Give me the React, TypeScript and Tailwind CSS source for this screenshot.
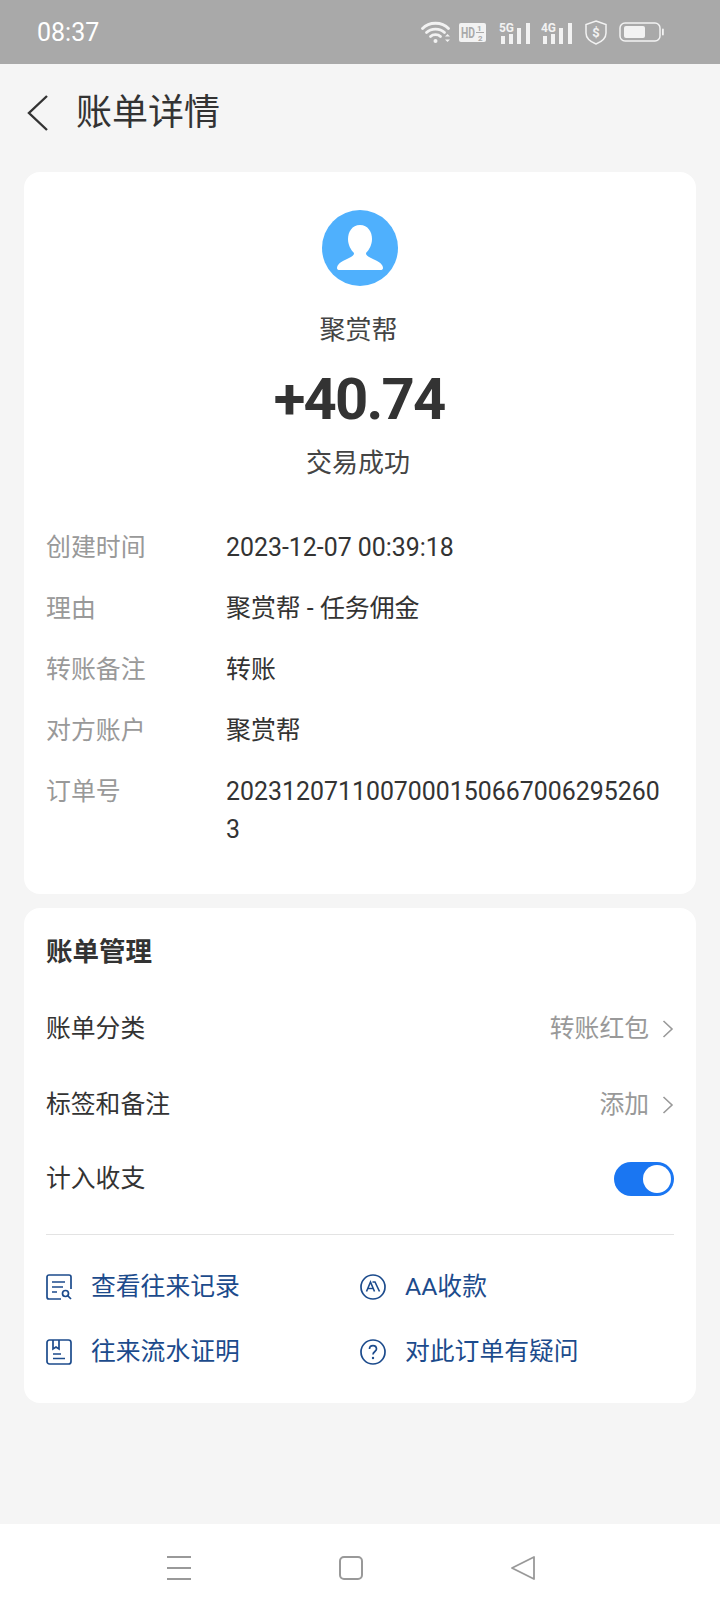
import React from "react";

const rows = [
  { label: "创建时间", value: "2023-12-07 00:39:18" },
  { label: "理由", value: "聚赏帮 - 任务佣金" },
  { label: "转账备注", value: "转账" },
  { label: "对方账户", value: "聚赏帮" },
  { label: "订单号", value: "20231207110070001506670062952603" },
];

const Chevron = () => (
  <svg width="12" height="18" viewBox="0 0 12 18" fill="none" stroke="#999999" strokeWidth="1.6">
    <path d="M1.5 1 L10 9 L1.5 17" />
  </svg>
);

const Signal = ({ label }: { label: string }) => (
  <svg width="32" height="24" viewBox="0 0 32 24" fill="#f2f2f2">
    <text x="0" y="12" fontSize="12.5" fontWeight="700" fontFamily="Roboto, sans-serif" textLength="15" lengthAdjust="spacingAndGlyphs">
      {label}
    </text>
    <rect x="2" y="16" width="4" height="8" />
    <rect x="10" y="14" width="4" height="10" />
    <rect x="18" y="8" width="4" height="16" />
    <rect x="27" y="3" width="4" height="21" />
  </svg>
);

const StatusBar = () => (
  <div className="h-16 bg-[#a9a9a9] flex items-center justify-between pl-[37px] pr-[56px] shrink-0">
    <span className="text-[25px] text-white leading-none">08:37</span>
    <div className="flex items-center">
      <svg width="30" height="24" viewBox="0 0 30 24" fill="none" stroke="#f2f2f2" strokeWidth="2.8" strokeLinecap="round">
        <path d="M1.5 8.5 C8 1.5 21 1.5 27.5 8.5" />
        <path d="M5.5 12.5 C10 8 19 8 23.5 12.5" />
        <path d="M9.5 16.5 C12 14 17 14 19.5 16.5" />
        <circle cx="14.5" cy="21" r="2" fill="#f2f2f2" stroke="none" />
        <path d="M24 16.5 L26.5 14 L29 16.5 Z" fill="#f2f2f2" stroke="none" />
        <path d="M24 19.5 L29 19.5 L26.5 22 Z" fill="#f2f2f2" stroke="none" />
      </svg>
      <svg width="27" height="19" viewBox="0 0 27 19" className="ml-[8px]">
        <rect width="27" height="19" rx="2" fill="#f2f2f2" />
        <text x="2" y="15" fontSize="14" fontWeight="700" fill="#a9a9a9" fontFamily="Roboto, sans-serif" textLength="14" lengthAdjust="spacingAndGlyphs">
          HD
        </text>
        <text x="18" y="8" fontSize="8" fontWeight="700" fill="#a9a9a9" fontFamily="Roboto, sans-serif">
          1
        </text>
        <path d="M17 9.5 H25" stroke="#a9a9a9" strokeWidth="1" />
        <text x="19" y="17.5" fontSize="8" fontWeight="700" fill="#a9a9a9" fontFamily="Roboto, sans-serif">
          2
        </text>
      </svg>
      <div className="ml-[13px] flex">
        <Signal label="5G" />
      </div>
      <div className="ml-[10px] flex">
        <Signal label="4G" />
      </div>
      <svg width="22" height="25" viewBox="0 0 22 25" fill="none" stroke="#f2f2f2" strokeWidth="1.5" className="ml-[12px]">
        <path d="M11 1 L21 4.5 V13 C21 18.5 16 22 11 24 C6 22 1 18.5 1 13 V4.5 Z" />
        <text x="11" y="17" fontSize="13" fontWeight="700" textAnchor="middle" fill="#f2f2f2" stroke="none" fontFamily="Roboto, sans-serif">
          $
        </text>
      </svg>
      <svg width="45" height="20" viewBox="0 0 45 20" fill="none" className="ml-[12px]">
        <rect x="1" y="1" width="40" height="18" rx="5" stroke="#f2f2f2" strokeWidth="1.5" />
        <rect x="5" y="4" width="21" height="12" rx="2" fill="#f2f2f2" />
        <rect x="43" y="6.5" width="1.8" height="7" rx="0.9" fill="#f2f2f2" />
      </svg>
    </div>
  </div>
);

const LinkItem = ({ icon, text }: { icon: React.ReactNode; text: string }) => (
  <div className="flex items-center h-[65px] text-[#1c4b8c] text-[24.8px]">
    <span className="w-[45px] shrink-0 flex">{icon}</span>
    <span>{text}</span>
  </div>
);

const RecordIcon = () => (
  <svg width="26" height="26" viewBox="0 0 26 26" fill="none" stroke="#1c4b8c" strokeWidth="1.7">
    <path d="M15 25 H3 A2 2 0 0 1 1 23 V3 A2 2 0 0 1 3 1 H23 A2 2 0 0 1 25 3 V15" />
    <path d="M6 8 H19 M6 13 H17 M6 18 H11" />
    <circle cx="19.5" cy="19.5" r="3" />
    <path d="M22 22 L25 25" />
  </svg>
);

const ProofIcon = () => (
  <svg width="26" height="26" viewBox="0 0 26 26" fill="none" stroke="#1c4b8c" strokeWidth="1.7">
    <rect x="1" y="1" width="24" height="24" rx="2.5" />
    <path d="M7 1 V10 L10 8 L13 10 V1" />
    <path d="M7 15 H15 M7 19.5 H19" />
  </svg>
);

const AAIcon = () => (
  <svg width="26" height="26" viewBox="0 0 26 26" fill="none" stroke="#1c4b8c" strokeWidth="1.7">
    <circle cx="13" cy="13" r="12" />
    <path d="M6.5 17.5 L10.5 8 L14.5 17.5" strokeWidth="1.6" />
    <path d="M12.5 8 L15 8 L19.5 17.5" strokeWidth="1.6" />
    <path d="M8 14.5 H13" strokeWidth="1.4" />
  </svg>
);

const HelpIcon = () => (
  <svg width="26" height="26" viewBox="0 0 26 26" fill="none" stroke="#1c4b8c" strokeWidth="1.7">
    <circle cx="13" cy="13" r="12" />
    <path d="M9.5 10 C9.5 5.5 16.5 5.5 16.5 10 C16.5 12.5 13 12.5 13 15.5" />
    <circle cx="13" cy="19" r="1.2" fill="#1c4b8c" stroke="none" />
  </svg>
);

const App = () => {
  return (
    <div className="w-[720px] h-[1612px] flex flex-col bg-[#f5f5f5] font-['Roboto','Noto_Sans_CJK_SC',sans-serif] overflow-hidden">
      <StatusBar />

      <div className="h-[108px] flex items-center shrink-0 pl-[27px] pb-[10px]">
        <svg width="22" height="36" viewBox="0 0 22 36" fill="none" stroke="#333333" strokeWidth="2.4">
          <path d="M20 1 L2 18 L20 35" />
        </svg>
        <span className="ml-[27px] text-[36px] text-[#333333]">账单详情</span>
      </div>

      <div className="mx-6 bg-white rounded-[16px] h-[722px] shrink-0 flex flex-col items-center pt-[38px]">
        <svg width="76" height="76" viewBox="0 0 76 76" className="-ml-[1px]">
          <circle cx="38" cy="38" r="38" fill="#4fb0fd" />
          <path
            d="M38 15 C46 15 50 22 50 29 C50 35 47 40 44 43 C44 46 47 47 52 49.5 C58 52 61 55 61 58 C61 59.5 60 60 58.5 60 H17.5 C16 60 15 59.5 15 58 C15 55 18 52 24 49.5 C29 47 32 46 32 43 C29 40 26 35 26 29 C26 22 30 15 38 15 Z"
            fill="#ffffff"
          />
        </svg>
        <div className="mt-[26px] -ml-[3px] text-[26px] leading-[36px] text-[#444444]">聚赏帮</div>
        <div className="mt-[16px] -ml-[2px] text-[58px] leading-[70px] font-bold tracking-[-1.8px] text-[#333333]">+40.74</div>
        <div className="mt-[11px] -ml-[4px] text-[26px] leading-[36px] text-[#444444]">交易成功</div>

        <div className="w-full pl-[22px] pr-[30px] mt-[48px] flex flex-col gap-[23px]">
          {rows.map((row) => (
            <div key={row.label} className="flex text-[24.9px] leading-[38px]">
              <span className="w-[180px] shrink-0 text-[#999999]">{row.label}</span>
              <span className="text-[#333333] break-all">{row.value}</span>
            </div>
          ))}
        </div>
      </div>

      <div className="mx-6 mt-[14px] bg-white rounded-[16px] h-[495px] shrink-0 px-[22px] pt-[26px]">
        <div className="text-[26.5px] leading-[36px] font-bold text-[#333333]">账单管理</div>

        <div className="mt-[22px] h-[74px] flex items-center justify-between text-[24.8px]">
          <span className="text-[#333333]">账单分类</span>
          <div className="flex items-center gap-[13px]">
            <span className="text-[#999999]">转账红包</span>
            <Chevron />
          </div>
        </div>
        <div className="h-[77px] flex items-center justify-between text-[24.8px]">
          <span className="text-[#333333]">标签和备注</span>
          <div className="flex items-center gap-[13px]">
            <span className="text-[#999999]">添加</span>
            <Chevron />
          </div>
        </div>
        <div className="h-[72px] flex items-center justify-between text-[24.8px]">
          <span className="text-[#333333]">计入收支</span>
          <div className="w-[60px] h-[34px] rounded-full bg-[#1a76f2] flex items-center justify-end pr-[3px]">
            <div className="w-[28px] h-[28px] rounded-full bg-white" />
          </div>
        </div>

        <div className="mt-[19px] h-[1px] bg-[#e3e3e3]" />

        <div className="mt-[19px] grid grid-cols-[314px_1fr]">
          <LinkItem icon={<RecordIcon />} text="查看往来记录" />
          <LinkItem icon={<AAIcon />} text="AA收款" />
          <LinkItem icon={<ProofIcon />} text="往来流水证明" />
          <LinkItem icon={<HelpIcon />} text="对此订单有疑问" />
        </div>
      </div>

      <div className="mt-auto h-[88px] bg-white flex items-start justify-between pl-[167px] pr-[185px] pt-[32px] shrink-0">
        <div className="w-6 h-6 flex flex-col justify-between">
          <div className="h-[2px] bg-[#999999]" />
          <div className="h-[2px] bg-[#999999]" />
          <div className="h-[2px] bg-[#999999]" />
        </div>
        <div className="w-6 h-6 rounded-[5px] border-2 border-[#999999]" />
        <svg width="24" height="24" viewBox="0 0 24 24" fill="none" stroke="#999999" strokeWidth="1.8" strokeLinejoin="round">
          <path d="M23 1 V23 L1 12 Z" />
        </svg>
      </div>
    </div>
  );
};

export default App;
